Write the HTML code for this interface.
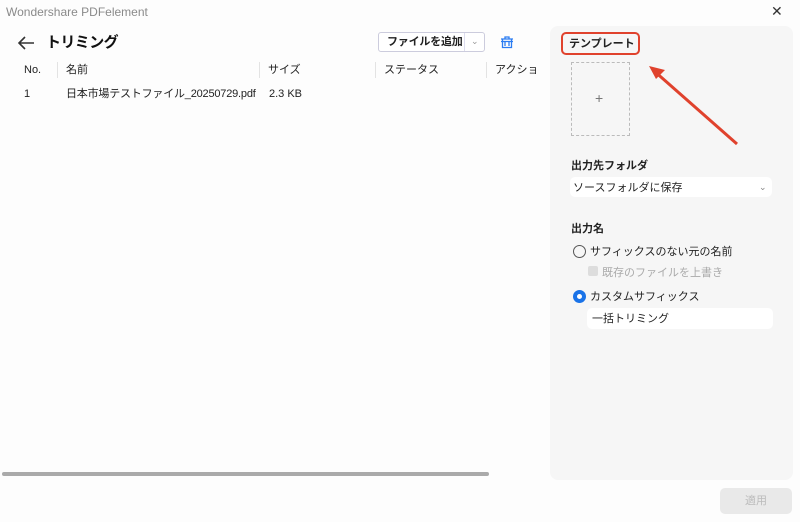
<!DOCTYPE html>
<html><head><meta charset="utf-8"><style>
*{margin:0;padding:0;box-sizing:border-box}
body{width:800px;height:522px;background:#fdfdfd;font-family:"Liberation Sans","Noto Sans CJK JP",sans-serif;color:#222;position:relative;overflow:hidden;font-size:11px;letter-spacing:0;line-height:14px}
.a{position:absolute;white-space:nowrap}
.sep{position:absolute;top:62px;width:1px;height:16px;background:#e3e3e3}
</style></head><body>
<div class="a" style="left:6px;top:5px;font-size:12px;color:#8a8a8a">Wondershare PDFelement</div>
<div class="a" style="left:771px;top:4px;font-size:14px;color:#333">✕</div>
<svg class="a" style="left:17px;top:35px" width="18" height="16" viewBox="0 0 18 16"><path d="M17 8H2M8 2L2 8l6 6" stroke="#333" stroke-width="1.6" fill="none"/></svg>
<div class="a" style="left:46px;top:35px;font-size:15px;font-weight:bold;color:#111;letter-spacing:-0.6px;line-height:16px">トリミング</div>
<div class="a" style="left:378px;top:32px;width:107px;height:20px;border:1px solid #ccd;border-radius:3px;background:#fff"></div>
<div class="a" style="left:387px;top:35px;font-size:11px;font-weight:bold;letter-spacing:-0.2px">ファイルを追加</div>
<div class="a" style="left:464px;top:33px;width:1px;height:18px;background:#dde"></div>
<div class="a" style="left:471px;top:34px;font-size:9px;color:#999">⌄</div>
<svg class="a" style="left:500px;top:35px" width="14" height="14" viewBox="0 0 14 14"><path d="M1 4h12M5 4V2h4v2M2.5 4v8.5h9V4M5 7v4M9 7v4M1 6.5h12" stroke="#2b7cf2" stroke-width="1.3" fill="none"/></svg>
<div class="a" style="left:24px;top:63px">No.</div>
<div class="sep" style="left:57px"></div>
<div class="a" style="left:66px;top:63px">名前</div>
<div class="sep" style="left:259px"></div>
<div class="a" style="left:268px;top:63px">サイズ</div>
<div class="sep" style="left:375px"></div>
<div class="a" style="left:384px;top:63px">ステータス</div>
<div class="sep" style="left:486px"></div>
<div class="a" style="left:495px;top:63px;width:43px;overflow:hidden">アクション</div>
<div class="a" style="left:24px;top:87px">1</div>
<div class="a" style="left:66px;top:87px;letter-spacing:-0.2px">日本市場テストファイル_20250729.pdf</div>
<div class="a" style="left:269px;top:87px">2.3 KB</div>
<div class="a" style="left:2px;top:472px;width:487px;height:4px;border-radius:2px;background:#aaa"></div>
<div class="a" style="left:550px;top:26px;width:243px;height:454px;background:#f6f6f6;border-radius:8px"></div>
<div class="a" style="left:561px;top:32px;width:79px;height:23px;border:2px solid #e0422d;border-radius:5px"></div>
<div class="a" style="left:569px;top:37px;font-weight:bold">テンプレート</div>
<div class="a" style="left:571px;top:62px;width:59px;height:74px;border:1px dashed #bbb"></div>
<div class="a" style="left:595px;top:91px;font-size:14px;color:#777">+</div>
<svg class="a" style="left:645px;top:62px" width="100" height="86"><path d="M92 82L8 8" stroke="#e0422d" stroke-width="3"/><path d="M4 4l16 4-9 9z" fill="#e0422d"/></svg>
<div class="a" style="left:571px;top:159px;font-weight:bold">出力先フォルダ</div>
<div class="a" style="left:570px;top:177px;width:202px;height:20px;background:#fff;border-radius:5px"></div>
<div class="a" style="left:573px;top:181px">ソースフォルダに保存</div>
<div class="a" style="left:759px;top:180px;font-size:9px;color:#888">⌄</div>
<div class="a" style="left:571px;top:222px;font-weight:bold">出力名</div>
<div class="a" style="left:573px;top:245px;width:13px;height:13px;border:1.5px solid #555;border-radius:50%"></div>
<div class="a" style="left:590px;top:245px">サフィックスのない元の名前</div>
<div class="a" style="left:588px;top:266px;width:10px;height:10px;background:#ddd;border-radius:2px"></div>
<div class="a" style="left:602px;top:266px;color:#aaa">既存のファイルを上書き</div>
<div class="a" style="left:573px;top:290px;width:13px;height:13px;border:4px solid #1a73e8;border-radius:50%;background:#fff"></div>
<div class="a" style="left:590px;top:290px">カスタムサフィックス</div>
<div class="a" style="left:587px;top:308px;width:186px;height:21px;background:#fff;border-radius:5px"></div>
<div class="a" style="left:592px;top:312px">一括トリミング</div>
<div class="a" style="left:720px;top:488px;width:72px;height:26px;background:#e9e9e9;border-radius:5px;text-align:center;line-height:26px;color:#bbb">適用</div>
</body></html>
